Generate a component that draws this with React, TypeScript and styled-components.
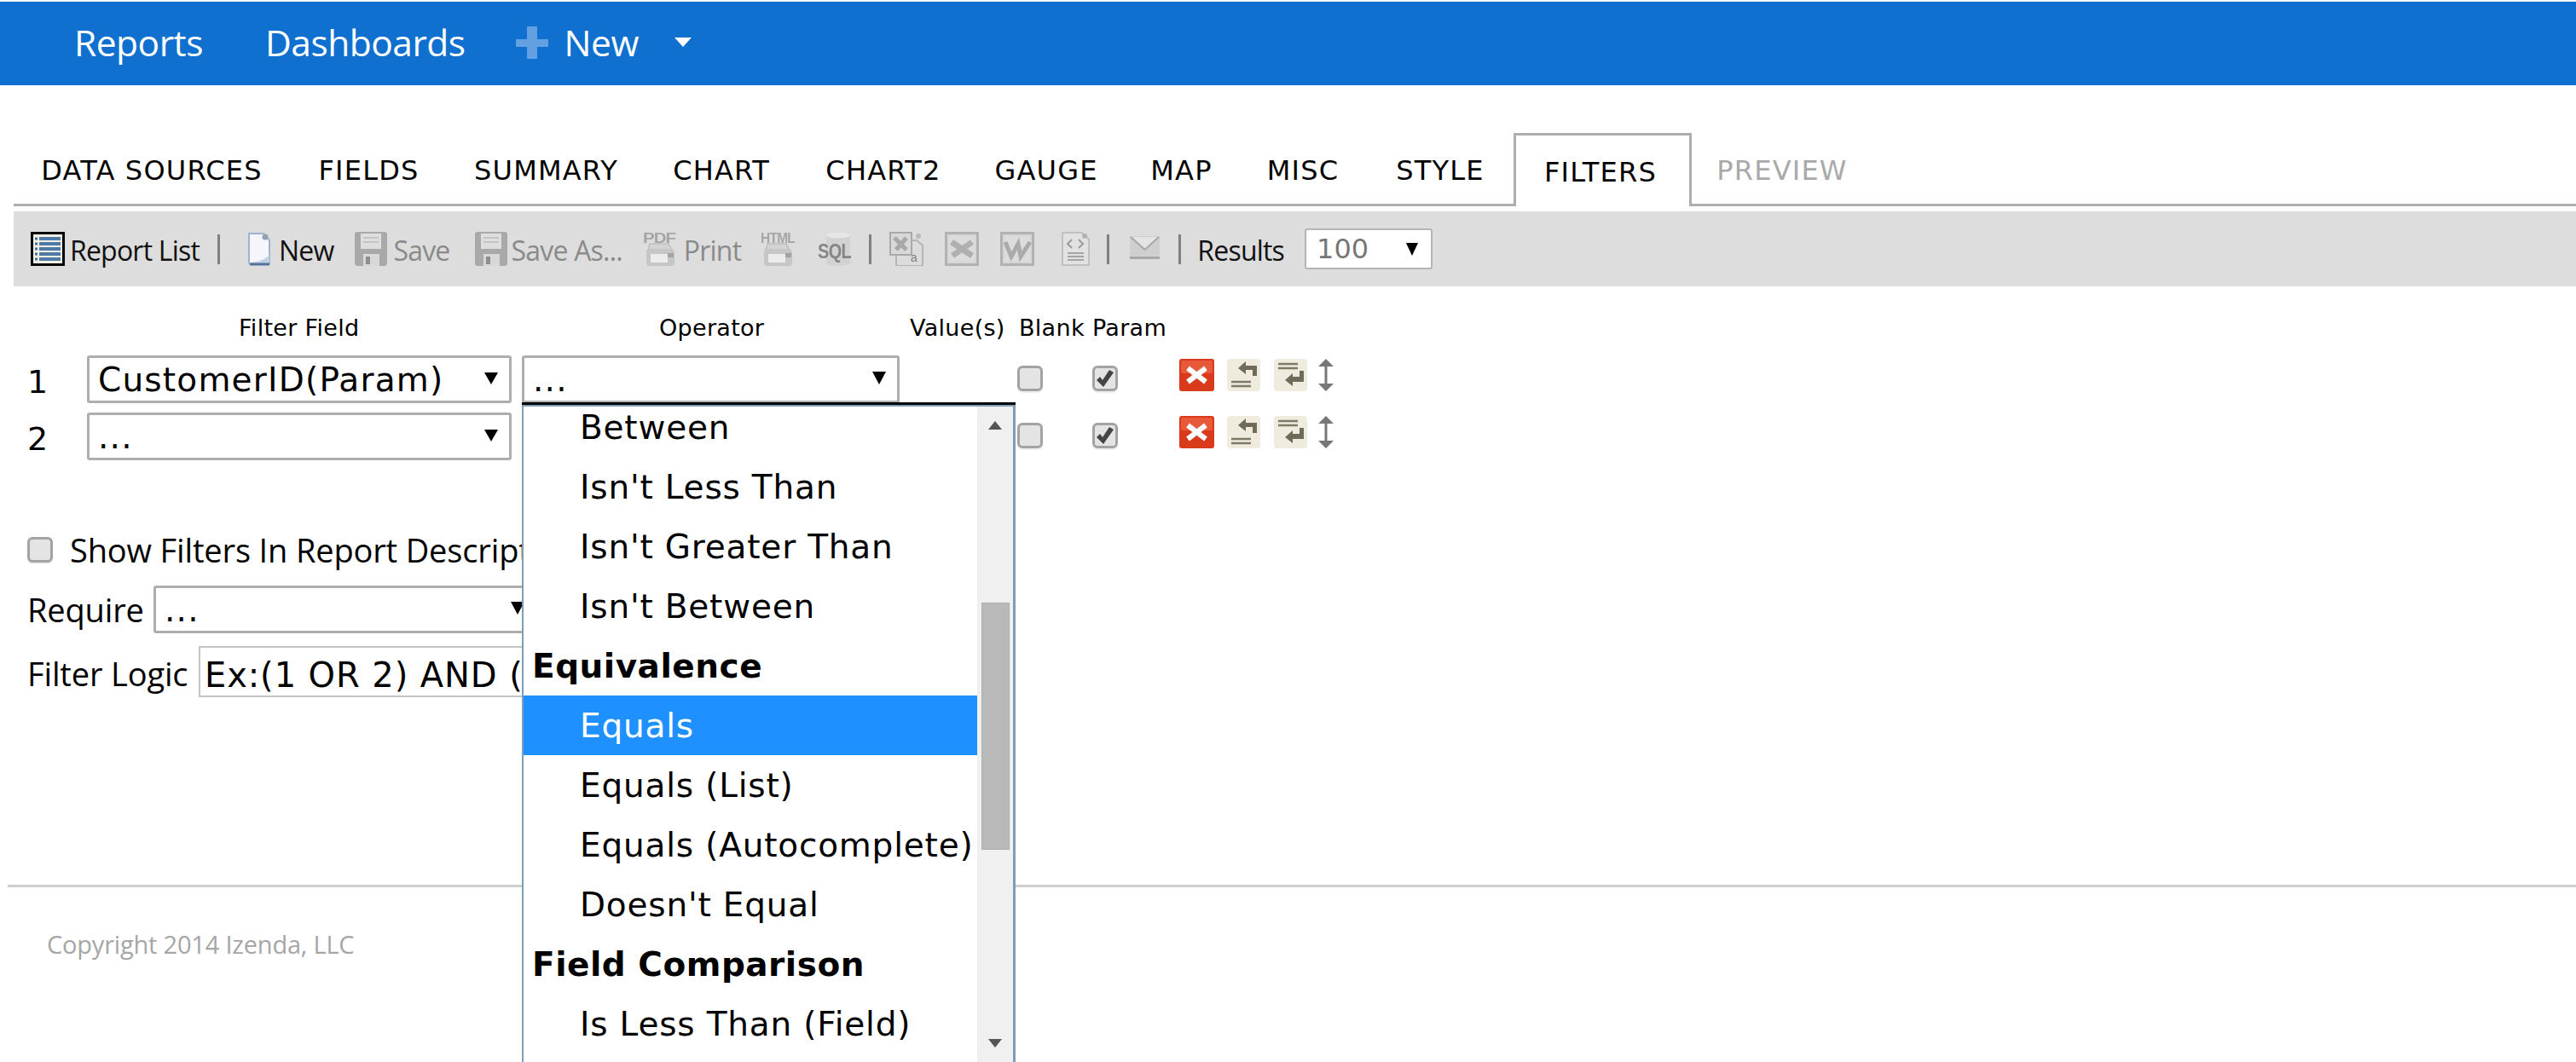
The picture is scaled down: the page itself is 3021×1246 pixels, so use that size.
import React from 'react'
import styled, { createGlobalStyle } from 'styled-components'

const UI = '"DejaVu Sans", sans-serif'
const SEGOE = '"Open Sans", "Noto Sans", sans-serif'

const Global = createGlobalStyle`
  html, body { margin: 0; padding: 0; background: #fff; overflow: hidden; }
  body { width: 3021px; height: 1246px; font-family: ${UI}; color: #000; }
`

const Page = styled.div`
  width: 3021px;
  height: 1246px;
  overflow: hidden;
  padding-top: 2px;
  box-sizing: border-box;
`

const TopBar = styled.header`
  height: 98px;
  box-sizing: border-box;
  padding: 0 0 3px 87px;
  background: #0f70cf;
  display: flex;
  align-items: center;
  font: 400 42.5px ${SEGOE};
  color: #fff;
`
const TopLink = styled.a<{ $gap?: number }>`
  margin-right: ${p => p.$gap ?? 0}px;
  letter-spacing: -0.5px;
`
const PlusMark = styled.span`
  position: relative;
  width: 38px;
  height: 38px;
  margin-right: 19px;
  &::before, &::after { content: ''; position: absolute; background: #62a0e2; }
  &::before { left: 13px; top: 0; width: 12px; height: 38px; }
  &::after { left: 0; top: 15px; width: 38px; height: 9px; }
`
const Caret = styled.i<{ $color: string; $w: number; $h: number; $lift?: number }>`
  display: block;
  flex: none;
  width: 0;
  height: 0;
  margin-bottom: ${p => p.$lift ?? 0}px;
  border-left: ${p => p.$w / 2}px solid transparent;
  border-right: ${p => p.$w / 2}px solid transparent;
  border-top: ${p => p.$h}px solid ${p => p.$color};
`

const Tabs = styled.nav`
  margin: 56px 0 0 16px;
  height: 83px;
  display: flex;
  align-items: flex-end;
  border-bottom: 3px solid #aeaeae;
`
const Tab = styled.a<{ $active?: boolean; $off?: boolean; $w: number }>`
  box-sizing: border-box;
  width: ${p => p.$w}px;
  flex: none;
  text-align: center;
  font-size: 32px;
  letter-spacing: 1.2px;
  height: ${p => (p.$active ? 86 : 62)}px;
  line-height: ${p => (p.$active ? 86 : 46)}px;
  color: ${p => (p.$off ? '#a9a9a9' : '#000')};
  ${p =>
    p.$active &&
    `border: 3px solid #aeaeae; border-bottom: 0; background: #fff; margin-bottom: -3px; padding-right: 5px;`}
`

const Toolbar = styled.div`
  margin: 6px 0 0 16px;
  height: 88px;
  background: #dddddd;
  display: flex;
  align-items: center;
  padding-left: 20px;
  font: 400 32px ${SEGOE};
  letter-spacing: -0.8px;
`
const ToolIcon = styled.svg<{ $w: number; $mr: number; $off?: boolean }>`
  flex: none;
  width: ${p => p.$w}px;
  height: 40px;
  margin-right: ${p => p.$mr}px;
  ${p => p.$off && 'filter: blur(0.7px);'}
`
const ToolText = styled.span<{ $off?: boolean; $mr: number }>`
  color: ${p => (p.$off ? '#8a8a8a' : '#111')};
  margin-right: ${p => p.$mr}px;
  padding-top: 2px;
  white-space: nowrap;
`
const Sep = styled.i<{ $mr: number }>`
  flex: none;
  width: 3px;
  height: 35px;
  background: #808080;
  margin-right: ${p => p.$mr}px;
`
const ResultsBox = styled.div`
  box-sizing: border-box;
  width: 150px;
  height: 48px;
  background: #fff;
  border: 2px solid #b5b5b5;
  border-radius: 3px;
  display: flex;
  align-items: center;
  justify-content: space-between;
  padding: 0 15px 0 12px;
  font: 400 32px ${UI};
  letter-spacing: 0;
  color: #777;
`

const FilterGrid = styled.section`
  display: grid;
  grid-template-columns: 86px 510px 443px 138px 88px 102px 1fr;
  grid-template-rows: 47px 67px 67px;
  margin: 34px 0 0 16px;
  font-size: 27px;
  letter-spacing: 0.3px;
  position: relative;
`
const Head = styled.div<{ $col: number; $left?: number }>`
  grid-column: ${p => p.$col};
  margin-left: ${p => p.$left ?? 0}px;
  white-space: nowrap;
  line-height: 30px;
`
const RowNo = styled.div`
  font-size: 38px;
  line-height: 56px;
  padding: 3px 0 0 16px;
`
const SelectBox = styled.div<{ $w?: number }>`
  box-sizing: border-box;
  flex: none;
  width: ${p => p.$w ?? 498}px;
  height: 56px;
  border: 3px solid #aeaeae;
  border-radius: 3px;
  background: #fff;
  display: flex;
  align-items: center;
  justify-content: space-between;
  padding: 2px 13px 0 10px;
  font: 400 39px ${UI};
  letter-spacing: 1.2px;
  line-height: 50px;
  white-space: nowrap;
`
const CheckCell = styled.div`
  padding-top: 12px;
`
const Check = styled.span`
  display: flex;
  flex: none;
  align-items: center;
  justify-content: center;
  box-sizing: border-box;
  width: 30px;
  height: 30px;
  border: 3px solid #a3a3a3;
  border-radius: 6px;
  background: #e4e4e4;
  box-shadow: 0 2px 1px #eee;
`
const ActionCell = styled.div`
  display: flex;
  align-items: flex-start;
  padding-top: 4px;
`
const ActionIcon = styled.svg<{ $w: number; $mr: number }>`
  flex: none;
  width: ${p => p.$w}px;
  height: 38px;
  margin-right: ${p => p.$mr}px;
`

const Dropdown = styled.div`
  position: absolute;
  left: 596px;
  top: 102px;
  width: 579px;
  height: 790px;
  box-sizing: border-box;
  border-top: 3px solid #000;
  background: #fff;
  z-index: 5;
  overflow: hidden;
  letter-spacing: 0;
`
const DropBody = styled.div`
  height: 100%;
  display: flex;
  border-top: 2px solid #7f9db9;
`
const DropList = styled.div`
  width: 532px;
  flex: none;
  border-left: 2px solid #7f9db9;
  overflow: hidden;
  font-size: 39px;
`
const ListScroll = styled.div`
  margin-top: -11px;
`
const Option = styled.div<{ $sel?: boolean; $group?: boolean }>`
  height: 70px;
  line-height: 72px;
  white-space: nowrap;
  letter-spacing: ${p => (p.$group ? 0.5 : 0.8)}px;
  padding-left: ${p => (p.$group ? 10 : 66)}px;
  font-weight: ${p => (p.$group ? 700 : 400)};
  background: ${p => (p.$sel ? '#1e90ff' : 'transparent')};
  color: ${p => (p.$sel ? '#fff' : '#000')};
`
const ScrollTrack = styled.div`
  flex: 1;
  background: #f0f0f0;
  border-right: 3px solid #7f9db9;
  position: relative;
`
const ScrollThumb = styled.div`
  position: absolute;
  left: 5px;
  width: 33px;
  top: 230px;
  height: 290px;
  background: #b9b9b9;
  border: 1px solid #adadad;
  box-sizing: border-box;
`
const ScrollArrow = styled.i<{ $down?: boolean }>`
  position: absolute;
  left: 13px;
  width: 0;
  height: 0;
  border-left: 8px solid transparent;
  border-right: 8px solid transparent;
  ${p =>
    p.$down
      ? `top: 742px; border-top: 10px solid #555;`
      : `top: 17px; border-bottom: 10px solid #555;`}
`

const Options = styled.div`
  margin: 62px 0 0 32px;
`
const OptionLine = styled.div<{ $h: number; $mt?: number }>`
  display: flex;
  align-items: center;
  height: ${p => p.$h}px;
  margin-top: ${p => p.$mt ?? 0}px;
  font: 400 38px ${SEGOE};
  letter-spacing: -0.15px;
  white-space: nowrap;
`
const OptionLabel = styled.span<{ $w?: number; $ml?: number; $pt?: number }>`
  flex: none;
  width: ${p => (p.$w ? `${p.$w}px` : 'auto')};
  margin-left: ${p => p.$ml ?? 0}px;
  padding-top: ${p => p.$pt ?? 0}px;
`
const LogicInput = styled.div`
  box-sizing: border-box;
  flex: none;
  width: 500px;
  height: 60px;
  border: 2px solid #c4c4c4;
  padding-left: 5px;
  font: 400 40px/64px ${UI};
  letter-spacing: 0.9px;
  white-space: nowrap;
  overflow: hidden;
`

const Footer = styled.footer`
  margin: 220px 0 0 9px;
  border-top: 3px solid #cfcfcf;
  padding: 47px 0 0 46px;
  font: 400 29px ${SEGOE};
  color: #a6a6a6;
  letter-spacing: -0.2px;
`

const ReportListIcon = () => (
  <ToolIcon $w={40} $mr={6} viewBox="0 0 40 40">
    <rect x="1.5" y="1.5" width="37" height="37" fill="#f4f1e4" stroke="#000" strokeWidth="3" />
    {[8, 14, 20, 26, 32].map(y => (
      <g key={y}>
        <rect x="5" y={y - 1.5} width="3" height="3" fill="#3f6d9c" />
        <rect x="10" y={y - 2} width="25" height="4" fill="#4f7aa8" />
      </g>
    ))}
  </ToolIcon>
)

const NewIcon = () => (
  <ToolIcon $w={28} $mr={9} viewBox="0 0 28 40">
    <path d="M2 2h17l7 8v27H2z" fill="#f4f6fb" stroke="#9fb2cf" strokeWidth="2" />
    <path d="M2 37h24V26c-3 6-14 10-24 10z" fill="#c3d0e4" />
    <circle cx="21" cy="6" r="3.5" fill="#8fa2b8" />
    <path d="M3 38h23" stroke="#53729a" strokeWidth="3" />
  </ToolIcon>
)

const SaveIcon = ({ mr }: { mr: number }) => (
  <ToolIcon $off $w={38} $mr={mr} viewBox="0 0 38 40">
    <path d="M2 0h34l2 2v36l-2 2H2l-2-2V2z" fill="#a9a9a9" />
    <rect x="7" y="2" width="24" height="18" fill="#dedede" />
    <path d="M10 7h18M10 12h18" stroke="#c4c4c4" strokeWidth="2" />
    <rect x="10" y="26" width="19" height="14" fill="#d8d8d8" />
    <rect x="13" y="29" width="5" height="9" fill="#8e8e8e" />
  </ToolIcon>
)

const PrinterIcon = ({ label, w, mr }: { label: string; w: number; mr: number }) => (
  <ToolIcon $off $w={w} $mr={mr} viewBox={`0 0 ${w} 40`}>
    <path d="M8 14h22l4 8H6z" fill="#d4d4d4" stroke="#bdbdbd" strokeWidth="1.5" />
    <path d="M5 20h30l2 3v15l-2 2H6l-2-2V23z" fill="#c6c6c6" />
    <rect x="9" y="26" width="20" height="10" fill="#ececec" />
    <rect x="29" y="25" width="7" height="5" fill="#a3a3a3" />
    <text x="0" y="13" fontFamily="Liberation Sans, sans-serif" fontSize="16" fontWeight="700" fill="#a5a5a5" textLength={w - 2} lengthAdjust="spacingAndGlyphs">
      {label}
    </text>
  </ToolIcon>
)

const SqlIcon = () => (
  <ToolIcon $off $w={40} $mr={20} viewBox="0 0 40 40">
    <path d="M10 4c0-5 28-5 28 0v32c0 5-28 5-28 0z" fill="#d2d2d2" />
    <ellipse cx="24" cy="4" rx="14" ry="3.5" fill="#e6e6e6" />
    <text x="0" y="31" fontFamily="Liberation Sans, sans-serif" fontSize="24" fontWeight="700" fill="#858585" textLength="39" lengthAdjust="spacingAndGlyphs">
      SQL
    </text>
  </ToolIcon>
)

const XlsCsvIcon = () => (
  <ToolIcon $off $w={40} $mr={25} viewBox="0 0 40 40">
    <path d="M8 10h24l7 6v24H8z" fill="#dcdcdc" stroke="#b4b4b4" strokeWidth="2" />
    <rect x="1" y="1" width="25" height="26" fill="#d8d8d8" stroke="#a9a9a9" strokeWidth="2" />
    <path d="M6 7l14 14M20 7L8 21" stroke="#a8a8a8" strokeWidth="5" />
    <circle cx="34" cy="5" r="3" fill="#b9b9b9" />
    <text x="25" y="35" fontFamily="Liberation Sans, sans-serif" fontSize="14" fill="#7b7b7b">a</text>
  </ToolIcon>
)

const OfficeIcon = ({ kind, mr }: { kind: 'x' | 'w'; mr: number }) => (
  <ToolIcon $off $w={40} $mr={mr} viewBox="0 0 40 40">
    <rect x="1.5" y="1.5" width="37" height="37" fill="#d6d6d6" stroke="#b2b2b2" strokeWidth="3" />
    <rect x="5" y="5" width="30" height="30" fill="#dcdcdc" />
    {kind === 'x' ? (
      <path d="M8 12l24 16M32 12L9 28" stroke="#b0b0b0" strokeWidth="7" />
    ) : (
      <path d="M6 12l7 17 8-15 3 15 11-17" fill="none" stroke="#ababab" strokeWidth="5" />
    )}
  </ToolIcon>
)

const XmlIcon = () => (
  <ToolIcon $off $w={33} $mr={20} viewBox="0 0 33 40">
    <path d="M1 1h23l8 8v30H1z" fill="#e2e2e2" stroke="#c0c0c0" strokeWidth="2" />
    <circle cx="27" cy="5" r="3" fill="#b3b3b3" />
    <path d="M12 9l-5 5 5 5M20 9l5 5-5 5" fill="none" stroke="#9a9a9a" strokeWidth="2" />
    <path d="M7 25h19M7 29h19M7 33h19" stroke="#a5a5a5" strokeWidth="2" />
  </ToolIcon>
)

const MailIcon = () => (
  <ToolIcon $off $w={35} $mr={22} viewBox="0 0 35 40">
    <rect x="0" y="5" width="35" height="27" fill="#cfcfcf" />
    <path d="M1 6l16.500 15L34 6" fill="#e4e4e4" stroke="#a8a8a8" strokeWidth="2" />
    <rect x="0" y="29" width="35" height="3" fill="#a8a8a8" />
  </ToolIcon>
)

const DeleteIcon = () => (
  <ActionIcon $w={41} $mr={15} viewBox="0 0 41 38">
    <rect width="41" height="38" rx="3" fill="#da3a1c" />
    <rect x="2" y="2" width="37" height="15" rx="2" fill="#e8593a" />
    <path d="M10 11l21 16M31 11L10 27" stroke="#fff" strokeWidth="6" />
  </ActionIcon>
)

const MoveIcon = ({ down, mr }: { down?: boolean; mr: number }) => (
  <ActionIcon $w={39} $mr={mr} viewBox="0 0 39 38">
    <rect width="39" height="38" rx="4" fill="#efecdf" />
    {down ? (
      <>
        <path d="M5 6h23M5 11h23" stroke="#7d7a68" strokeWidth="2.500" />
        <path d="M13 25l9-8v4h8v-7h5v13H22v5z" fill="#6e6b59" />
      </>
    ) : (
      <>
        <path d="M5 27h23M5 32h23" stroke="#7d7a68" strokeWidth="2.500" />
        <path d="M13 11l9-8v5h13v12h-5v-7h-8v5z" fill="#6e6b59" />
      </>
    )}
  </ActionIcon>
)

const ResizeIcon = () => (
  <ActionIcon $w={18} $mr={0} viewBox="0 0 18 38">
    <path d="M9 0l9 9H0zM9 38l-9-9h18z" fill="#777" />
    <rect x="7.500" y="8" width="3" height="22" fill="#777" />
  </ActionIcon>
)

const CheckMark = () => (
  <svg width="24" height="22" viewBox="0 0 22 22">
    <path d="M1 13l4-4 3 4 8-12 5 3-12 17z" fill="#444" />
  </svg>
)

const tabs = [
  { t: 'DATA SOURCES', w: 324 },
  { t: 'FIELDS', w: 185 },
  { t: 'SUMMARY', w: 231 },
  { t: 'CHART', w: 180 },
  { t: 'CHART2', w: 200 },
  { t: 'GAUGE', w: 182 },
  { t: 'MAP', w: 135 },
  { t: 'MISC', w: 150 },
  { t: 'STYLE', w: 172 },
]

const operators: { t: string; group?: boolean; sel?: boolean }[] = [
  { t: 'Between' },
  { t: "Isn't Less Than" },
  { t: "Isn't Greater Than" },
  { t: "Isn't Between" },
  { t: 'Equivalence', group: true },
  { t: 'Equals', sel: true },
  { t: 'Equals (List)' },
  { t: 'Equals (Autocomplete)' },
  { t: "Doesn't Equal" },
  { t: 'Field Comparison', group: true },
  { t: 'Is Less Than (Field)' },
  { t: 'Is Greater Than (Field)' },
]

export default function App() {
  return (
    <>
      <Global />
      <Page>
        <TopBar>
          <TopLink $gap={73}>Reports</TopLink>
          <TopLink $gap={59}>Dashboards</TopLink>
          <PlusMark />
          <TopLink $gap={42}>New</TopLink>
          <Caret $color="#fff" $w={20} $h={11} />
        </TopBar>

        <Tabs>
          {tabs.map(x => (
            <Tab key={x.t} $w={x.w}>{x.t}</Tab>
          ))}
          <Tab $active $w={209}>FILTERS</Tab>
          <Tab $off $w={212}>PREVIEW</Tab>
        </Tabs>

        <Toolbar>
          <ReportListIcon />
          <ToolText $mr={21}>Report List</ToolText>
          <Sep $mr={32} />
          <NewIcon />
          <ToolText $mr={25}>New</ToolText>
          <SaveIcon mr={7} />
          <ToolText $off $mr={29}>Save</ToolText>
          <SaveIcon mr={5} />
          <ToolText $off $mr={24}>Save As...</ToolText>
          <PrinterIcon label="PDF" w={40} mr={8} />
          <ToolText $off $mr={23}>Print</ToolText>
          <PrinterIcon label="HTML" w={42} mr={25} />
          <SqlIcon />
          <Sep $mr={21} />
          <XlsCsvIcon />
          <OfficeIcon kind="x" mr={25} />
          <OfficeIcon kind="w" mr={32} />
          <XmlIcon />
          <Sep $mr={24} />
          <MailIcon />
          <Sep $mr={19} />
          <ToolText $mr={24}>Results</ToolText>
          <ResultsBox>
            100
            <Caret $color="#000" $w={15} $h={15} />
          </ResultsBox>
        </Toolbar>

        <FilterGrid>
          <Head $col={2} $left={178}>Filter Field</Head>
          <Head $col={3} $left={161}>Operator</Head>
          <Head $col={4} $left={12}>Value(s)</Head>
          <Head $col={5} $left={2}>Blank</Head>
          <Head $col={6} $left={0}>Param</Head>
          <div />
          {['CustomerID(Param)', '...'].map((field, i) => (
            <React.Fragment key={i}>
              <RowNo>{i + 1}</RowNo>
              <div>
                <SelectBox>
                  {field}
                  <Caret $color="#000" $w={16} $h={14} $lift={5} />
                </SelectBox>
              </div>
              <div>
                {i === 0 && (
                  <SelectBox $w={443}>
                    ...
                    <Caret $color="#000" $w={16} $h={15} $lift={5} />
                  </SelectBox>
                )}
              </div>
              <div />
              <CheckCell><Check /></CheckCell>
              <CheckCell><Check><CheckMark /></Check></CheckCell>
              <ActionCell>
                <DeleteIcon />
                <MoveIcon mr={16} />
                <MoveIcon down mr={13} />
                <ResizeIcon />
              </ActionCell>
            </React.Fragment>
          ))}

          <Dropdown>
            <DropBody>
              <DropList>
                <ListScroll>
                  {operators.map(o => (
                    <Option key={o.t} $group={o.group} $sel={o.sel}>{o.t}</Option>
                  ))}
                </ListScroll>
              </DropList>
              <ScrollTrack>
                <ScrollArrow />
                <ScrollThumb />
                <ScrollArrow $down />
              </ScrollTrack>
            </DropBody>
          </Dropdown>
        </FilterGrid>

        <Options>
          <OptionLine $h={64}>
            <Check />
            <OptionLabel $ml={20}>Show Filters In Report Description</OptionLabel>
          </OptionLine>
          <OptionLine $h={56} $mt={10}>
            <OptionLabel $w={148}>Require</OptionLabel>
            <SelectBox $w={451}>
              ...
              <Caret $color="#000" $w={16} $h={15} $lift={5} />
            </SelectBox>
          </OptionLine>
          <OptionLine $h={60} $mt={15}>
            <OptionLabel $w={201} $pt={4}>Filter Logic</OptionLabel>
            <LogicInput>Ex:(1 OR 2) AND (3 OR 4)</LogicInput>
          </OptionLine>
        </Options>

        <Footer>Copyright 2014 Izenda, LLC</Footer>
      </Page>
    </>
  )
}
